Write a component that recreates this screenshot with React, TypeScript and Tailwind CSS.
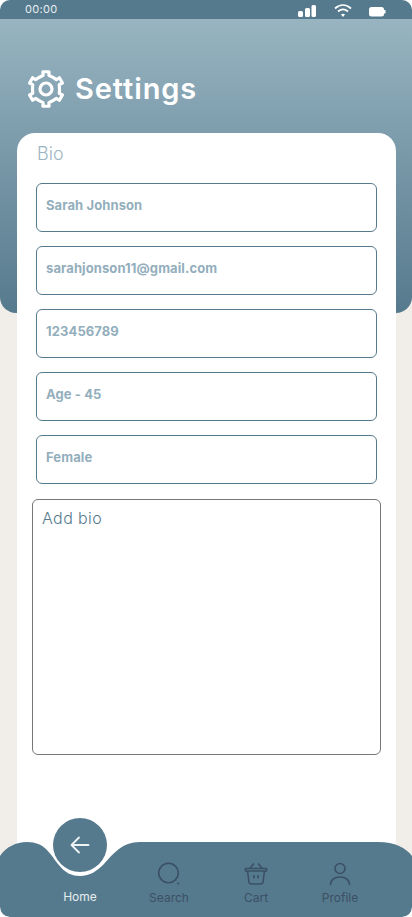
import React from 'react';

const fields = ['Sarah Johnson', 'sarahjonson11@gmail.com', '123456789', 'Age - 45', 'Female'];

const gearPoints = Array.from({ length: 6 }, (_, k) => {
  const a = -90 + 60 * k;
  return [
    [a - 27, 13.500],
    [a - 12, 14],
    [a - 10, 17.500],
    [a + 10, 17.500],
    [a + 12, 14],
  ]
    .map(([deg, r]) => {
      const rad = (deg * Math.PI) / 180;
      return `${(20 + r * Math.cos(rad)).toFixed(2)},${(20 + r * Math.sin(rad)).toFixed(2)}`;
    })
    .join(' ');
}).join(' ');

const GearIcon = () => (
  <svg width="40" height="40" viewBox="0 0 40 40" fill="none" stroke="#fff" strokeWidth="3.200" strokeLinejoin="round">
    <polygon points={gearPoints} />
    <circle cx="20" cy="20" r="6" />
  </svg>
);

const StatusBar = () => (
  <div className="flex h-[19px] items-center bg-[#567a8d] pl-[25px] pr-[24px] text-[11px] tracking-[0.3px] text-[#e8eef1]">
    <span>00:00</span>
    <svg className="ml-auto" width="90" height="16" viewBox="0 0 90 16" fill="#fff">
      <rect x="0" y="9" width="5" height="6" rx="1.5" />
      <rect x="7" y="6" width="5" height="9" rx="1.5" />
      <rect x="13.5" y="3" width="4.5" height="12" rx="1.5" />
      <path d="M37 6.5c5-4.5 11-4.500 16 0" fill="none" stroke="#fff" strokeWidth="1.800" />
      <path d="M40 9.500c3-2.500 7-2.500 10 0" fill="none" stroke="#fff" strokeWidth="1.800" />
      <path d="M43 12.500c1.200-1.100 2.800-1.100 4 0L45 15z" />
      <rect x="71" y="5" width="15" height="9.500" rx="2.500" />
      <rect x="86" y="8" width="1.500" height="3.500" />
    </svg>
  </div>
);

const SearchIcon = () => (
  <svg width="24" height="24" viewBox="0 0 24 24" fill="none" stroke="#3a5064" strokeWidth="1.600">
    <circle cx="11.500" cy="11" r="9.800" />
    <path d="M20.500 21l1.300 1" strokeWidth="2" />
  </svg>
);

const CartIcon = () => (
  <svg width="24" height="24" viewBox="0 0 24 24" fill="none" stroke="#3a5064" strokeWidth="1.600">
    <path d="M1.500 6.500h21v2.500h-21z" />
    <path d="M3.500 9l1.500 11c.2 1.300 1 2 2.300 2h9.400c1.300 0 2.100-.7 2.300-2L20.500 9" />
    <path d="M6 6l4-4.500M18 6l-4-4.500" />
    <path d="M10 13v3.500M14 13v3.500" />
  </svg>
);

const ProfileIcon = () => (
  <svg width="24" height="24" viewBox="0 0 24 24" fill="none" stroke="#3a5064" strokeWidth="1.600">
    <circle cx="12" cy="6.500" r="5" />
    <path d="M2.500 23c0-5 4-8 9.500-8s9.500 3 9.500 8" />
  </svg>
);

const BottomNav = () => (
  <div className="relative -mt-[75px] h-[75px] shrink-0">
    <svg className="absolute inset-0" width="412" height="75" viewBox="0 0 412 75" fill="#567a8d">
      <path d="M0 14C6 5 16 0 27 0C45 0 50 12 58 22C65 31 72 34 80 34C90 34 97 29 104 22C113 12 122 0 140 0H378C395 0 406 6 412 14V65Q412 75 402 75H10Q0 75 0 65Z" />
    </svg>
    <button className="absolute left-[53px] -top-[24px] flex h-[54px] w-[54px] items-center justify-center rounded-full bg-[#567a8d]">
      <svg width="20" height="18" viewBox="0 0 20 18" fill="none" stroke="#eef3f5" strokeWidth="1.800" strokeLinecap="round" strokeLinejoin="round">
        <path d="M18.500 9H1.500M9 1.500L1.500 9l7.500 7.500" />
      </svg>
    </button>
    <div className="relative flex pl-[36px] text-[12px] leading-[16px] text-[#3a5064]">
      <div className="flex w-[88px] flex-col items-center pt-[47px] text-[#e6edf0]">Home</div>
      <div className="flex w-[90px] flex-col items-center gap-[1px] pt-[20px]">
        <SearchIcon />
        <span className="mt-[3px]">Search</span>
      </div>
      <div className="flex w-[84px] flex-col items-center gap-[1px] pt-[20px]">
        <CartIcon />
        <span className="mt-[3px]">Cart</span>
      </div>
      <div className="flex w-[84px] flex-col items-center gap-[1px] pt-[20px]">
        <ProfileIcon />
        <span className="mt-[3px]">Profile</span>
      </div>
    </div>
  </div>
);

export default function App() {
  return (
    <div className="h-[917px] w-[412px] overflow-hidden bg-white font-['Inter',sans-serif]">
      <div className="flex h-full flex-col overflow-hidden rounded-[10px] bg-[#f1ede9]">
        <StatusBar />
        <div className="h-[294px] shrink-0 rounded-b-[16px] bg-gradient-to-b from-[#98b4c1] to-[#567a8d] pl-[26px] pt-[50px]">
          <div className="flex items-center gap-[9px] text-white">
            <GearIcon />
            <h1 className="text-[29px] font-semibold leading-[40px] tracking-[0.900px]">Settings</h1>
          </div>
        </div>
        <div className="ml-[17px] mr-[16px] -mt-[180px] flex-1 rounded-t-[18px] bg-white pl-[15px] pr-[15px]">
          <p className="pl-[5px] pt-[10px] text-[18px] font-light leading-[22px] text-[#9db5c2]">Bio</p>
          <div className="mt-[18px] flex flex-col gap-[14px] px-[4px]">
            {fields.map((field) => (
              <div
                key={field}
                className="h-[49px] rounded-[6px] border border-[#567a8d] px-[9px] pt-[13px] text-[13px] font-bold leading-[16px] tracking-[0.1px] text-[#93aebc]"
              >
                {field}
              </div>
            ))}
          </div>
          <div className="mt-[15px] h-[256px] rounded-[6px] border border-[#777] px-[9px] pt-[8px] text-[16px] font-light leading-[20px] tracking-[0.4px] text-[#567a8d]">
            Add bio
          </div>
        </div>
        <BottomNav />
      </div>
    </div>
  );
}
